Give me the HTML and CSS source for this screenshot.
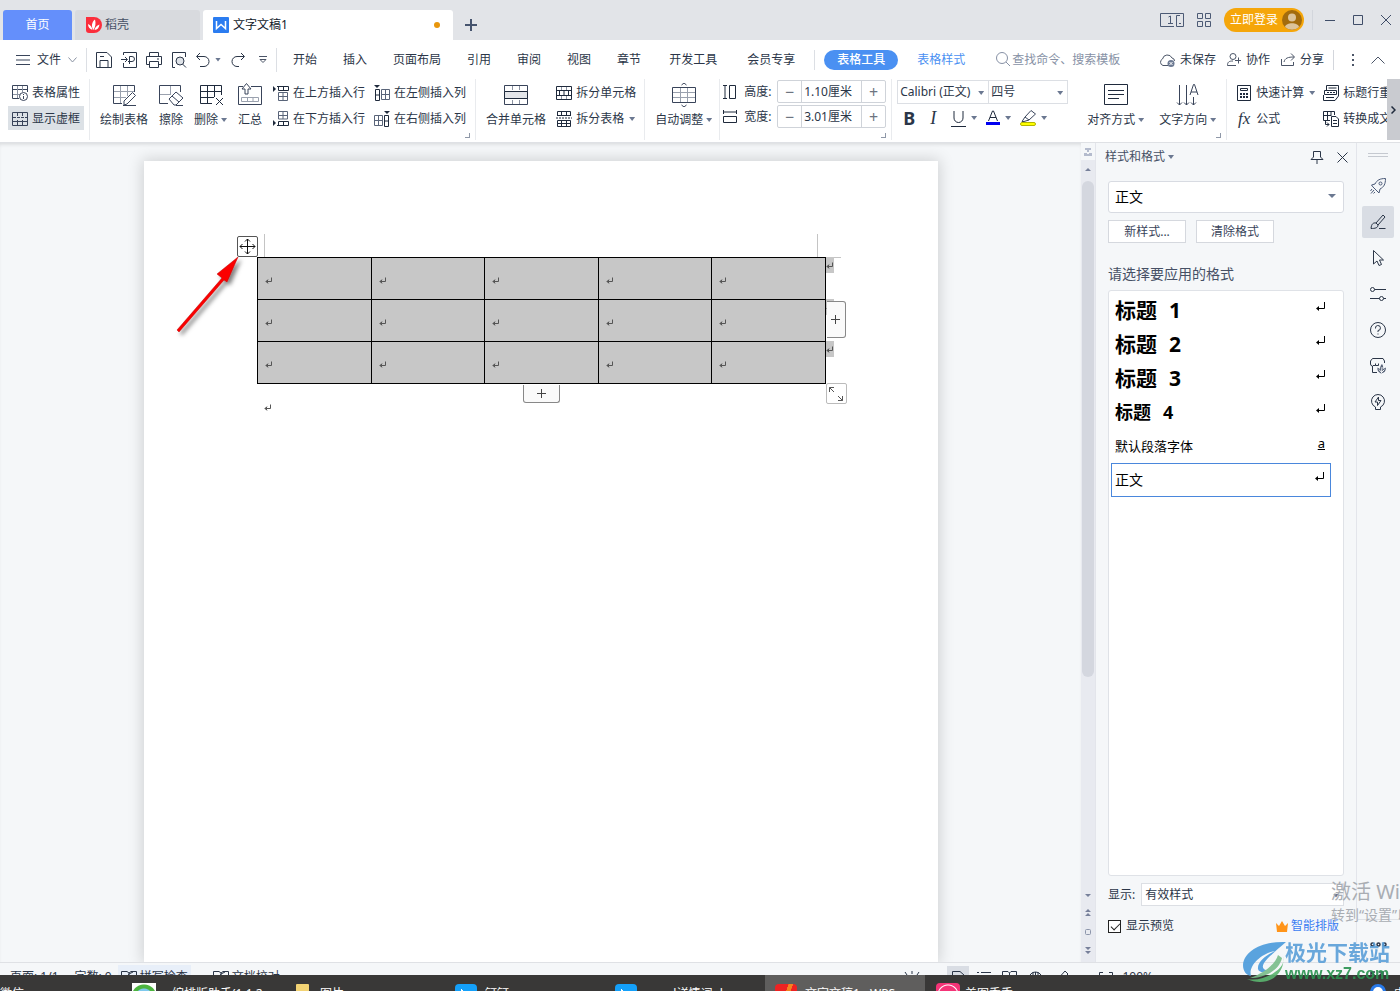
FILE: index.html
```html
<!DOCTYPE html>
<html lang="zh-CN">
<head>
<meta charset="utf-8">
<title>文字文稿1</title>
<link rel="stylesheet" href="styles.css">
</head>
<body>
<svg class="defs" aria-hidden="true">
  <symbol id="mark" viewBox="0 0 8 8"><path d="M6.500 0.500V4.500H1M3 2.500L1 4.500L3 6.500M2.500 3V6" fill="none" stroke="currentColor"/></symbol>
  <symbol id="mark-lg" viewBox="0 0 10 9"><path d="M8.500 0V6.500H1" fill="none" stroke="currentColor"/><path d="M0 6.500L3 4V9Z" fill="currentColor"/></symbol>
  <symbol id="book" viewBox="0 0 16 14"><path d="M.5 1.500H6L8 3L10 1.500H15.500V13H.5ZM8 3V13M3 6L5 8L8 4L12 2" fill="none" stroke="currentColor"/></symbol>
</svg>
<div class="app">
  <header class="titlebar">
    <nav class="tabs">
      <button class="tab tab-home">首页</button>
      <button class="tab tab-store">
        <svg width="16" height="16" viewBox="0 0 16 16"><path d="M0 0H8A8 8 0 0 1 8 16H3A3 3 0 0 1 0 13Z" fill="#fb2e3c"/><path d="M7.500 13C5 10 5.500 5 9 2.500C10 6 9.500 10 7.500 13ZM6.500 13C3.500 12 2 10 2 7C4.500 8 6 10 6.500 13ZM8.500 13C9 10.500 10.500 8.500 13.500 7.500C13 11 11.500 12.500 8.500 13Z" fill="#fff"/></svg>
        稻壳</button>
      <button class="tab tab-doc">
        <svg width="16" height="16" viewBox="0 0 16 16"><rect width="16" height="16" rx="1" fill="#2b7cf0"/><path d="M3.500 4V11.500L8 7.500L12.500 11.500V4" fill="none" stroke="#fff" stroke-width="1.500"/></svg>
        文字文稿1<i class="dot"></i></button>
      <button class="tab-add" aria-label="新建"><svg width="12" height="12"><path d="M6 0V12M0 6H12" stroke="#46546e" stroke-width="2"/></svg></button>
    </nav>
    <div class="window-tools">
      <button class="one" aria-label="布局"><svg width="24" height="14" fill="none" stroke="#4c5a75"><path d="M14 13.500H.5V.5H23.500V13.500H16.500V2.500H20M8.500 4L10.500 3V10.500M8 10.500H13M19 10.500H21"/></svg></button>
      <button class="grid4" aria-label="应用"><svg width="14" height="14" fill="none" stroke="#4c5a75"><path d="M.5.5H5.500V5.500H.5ZM8.500.5H13.500V5.500H8.500ZM.5 8.500H5.500V13.500H.5ZM8.500 8.500H13.500V13.500H8.500Z"/></svg></button>
      <button class="login">立即登录<svg width="20" height="20"><circle cx="10" cy="10" r="10" fill="#a36c0d"/><circle cx="10" cy="7.500" r="4" fill="#dcc49b"/><path d="M3 17C4 12 16 12 17 17A10 10 0 0 1 3 17Z" fill="#dcc49b"/></svg></button>
      <i class="rule"></i>
      <button aria-label="最小化"><svg width="10" height="10"><path d="M0 5.500H10" stroke="#3f4d68"/></svg></button>
      <button aria-label="最大化"><svg width="10" height="10"><path d="M.5.5H9.500V9.500H.5Z" fill="none" stroke="#3f4d68"/></svg></button>
      <button aria-label="关闭"><svg width="10" height="10"><path d="M0 0L10 10M10 0L0 10" stroke="#3f4d68"/></svg></button>
    </div>
  </header>

  <div class="menubar">
    <button class="file"><svg width="14" height="10"><path d="M0 .5H14M0 5H14M0 9.500H14" stroke="#39445a"/></svg>文件<svg width="9" height="6"><path d="M.5.5L4.500 5L8.500.5" fill="none" stroke="#8a93a3"/></svg></button>
    <div class="quick">
      <button aria-label="保存"><svg width="16" height="16" fill="none" stroke="#2b3648"><path d="M.5.5H11L15.500 5V15.500H.5ZM4 15V8.500H12V15M4 4.500H8"/></svg></button>
      <button aria-label="输出PDF"><svg width="16" height="16" fill="none" stroke="#2b3648"><path d="M2.500 3V.5H15.500V15.500H2.500V11M0 7.500H6M4 5L6.500 7.500L4 10M8.500 12V4.500H11A2.500 2.500 0 0 1 11 9.500H7"/></svg></button>
      <button aria-label="打印"><svg width="16" height="16" fill="none" stroke="#2b3648"><path d="M3.500 4V.5H12.500V4M3 12.500H.5V4.500H15.500V12.500H13M3.500 9.500H12.500V15.500H3.500ZM11 7H13"/></svg></button>
      <button aria-label="预览"><svg width="16" height="16" fill="none" stroke="#2b3648"><path d="M4 15.500H1.500V.5H14.500V5M11.500 12L15 15.500"/><circle cx="9" cy="9" r="4" fill="#dfe3e8"/></svg></button>
      <button aria-label="撤销" class="with-caret"><svg width="14" height="14" fill="none" stroke="#2b3648"><path d="M4 0L.5 3.500L4 7M1 3.500H8A5 5 0 0 1 8 13.500H4"/></svg><i class="caret"></i></button>
      <button aria-label="恢复"><svg width="14" height="14" fill="none" stroke="#2b3648"><path d="M10 0L13.500 3.500L10 7M13 3.500H6A5 5 0 0 0 6 13.500H8"/></svg></button>
      <button aria-label="更多"><svg width="8" height="8" fill="none" stroke="#4b5567"><path d="M0 .5H8M1 3.500L4 6.500L7 3.500Z"/></svg></button>
    </div>
    <nav class="menus">
      <button>开始</button><button>插入</button><button>页面布局</button><button>引用</button><button>审阅</button><button>视图</button><button>章节</button><button class="wide">开发工具</button><button class="wide">会员专享</button>
    </nav>
    <button class="pill">表格工具</button>
    <button class="blue">表格样式</button>
    <label class="search"><svg width="15" height="15" fill="none" stroke="#8791a5"><circle cx="6" cy="6" r="5.500"/><path d="M10 10L14 14"/></svg><input type="text" placeholder="查找命令、搜索模板" aria-label="查找命令"></label>
    <div class="menu-right">
      <button><svg width="17" height="14" fill="none" stroke="#4b5567"><path d="M9 12.500H4A3.500 3.500 0 0 1 3.500 6A5 5 0 0 1 13 5A3 3 0 0 1 15.500 8"/><circle cx="12" cy="10.500" r="3.500" fill="#6d7a93" stroke="none"/><path d="M10.500 9L13.500 12M13.500 9L10.500 12" stroke="#fff"/></svg>未保存</button>
      <button><svg width="15" height="14" fill="none" stroke="#4b5567"><circle cx="6" cy="3.500" r="3"/><path d="M9 12.500H.5C.5 9 2 8 6 8M8 7.500H14M11.500 4.500V10.500"/></svg>协作</button>
      <button><svg width="15" height="14" fill="none" stroke="#4b5567"><path d="M.5 6V12.500H12.500V9M3 9C4 5 7 4 13 4M10 .5L13.500 4L10 7.500"/></svg>分享</button>
      <i class="rule"></i>
      <button aria-label="更多选项"><svg width="2" height="12" fill="#4b5567"><path d="M0 0H2V2H0ZM0 5H2V7H0ZM0 10H2V12H0Z"/></svg></button>
      <button class="fold" aria-label="收起"><svg width="14" height="8"><path d="M.5 7.500L7 1L13.500 7.500" fill="none" stroke="#4b5567"/></svg></button>
    </div>
  </div>

  <div class="ribbon">
    <div class="groups">
      <section class="group g-props">
        <div class="stack">
          <button class="row"><svg width="16" height="16" fill="none" stroke="#39445a"><path d="M7 13.500H.5V.5H15.500V7M.5 4.500H15" /><path d="M5.500 1V13M1 9.500H8M10.500 1V7" stroke="#8b93a2"/><circle cx="11.500" cy="11.500" r="4" fill="#fff"/><path d="M11.500 11V14M11.500 9V10"/></svg>表格属性</button>
          <button class="row on"><svg width="16" height="16" fill="none" stroke="#39445a"><path d="M.5 1.500H15.500V14.500H.5ZM5.500 1.500V5M10.500 1.500V5M5.500 9V14M10.500 9V14M.5 10.500H15"/><path d="M1 6.500H15" stroke-dasharray="3 1"/></svg>显示虚框</button>
        </div>
      </section>
      <section class="group g-draw">
        <button class="big"><svg width="24" height="24" fill="none" stroke="#39445a"><path d="M10 20.500H1.500V2.500H22.500V9" /><path d="M2 8.500H22M2 14.500H14M8.500 3V20M15.500 3V13" stroke="#9aa1ae"/><path d="M12 22V18L20.500 9.500L23.500 12.500L15 21ZM11 22.500H24" fill="#fff"/></svg><span>绘制表格</span></button>
        <button class="big"><svg width="24" height="24" fill="none" stroke="#39445a"><path d="M9 20.500H.5V2.500H21.500V9"/><path d="M1 11.500H12M11.500 3V12" stroke="#9aa1ae"/><path d="M10 16L17 9L24 15L17 22H15ZM13 13L20 19M17 22.500H24" fill="#fff"/></svg><span>擦除</span></button>
        <button class="big"><svg width="24" height="24" fill="none" stroke="#1f2a3c"><path d="M13 20.500H1.500V2.500H22.500V12M1.500 8.500H22M1.500 14.500H15M8.500 3V20M15.500 3V14M17 15L24 22M24 15L17 22"/></svg><span class="cap">删除<i class="caret"></i></span></button>
        <button class="big"><svg width="24" height="24" fill="none" stroke="#39445a"><path d="M5 3.500H.5V21.500H23.500V3.500H13"/><path d="M3.500 14.500H20.500V18.500H3.500ZM9.500 14V18M15 14V18" stroke="#9aa1ae"/><path d="M7 11V6H4L8.500.5L13 6H10V11Z" fill="#fff"/></svg><span>汇总</span></button>
        <div class="stack">
          <button class="row"><svg width="16" height="16" fill="none" stroke="#1f2a3c"><path d="M0 1V7L3 4Z" fill="#1f2a3c" stroke="none"/><path d="M4 1.500H15.500V5.500H5.500V1.500M10.500 1.500V5"/><path d="M5.500 7.500H14.500V15.500H5.500ZM10 8V15M6 11.500H14" stroke="#596479"/></svg>在上方插入行</button>
          <button class="row"><svg width="16" height="16" fill="none" stroke="#1f2a3c"><path d="M0 9V15L3 12Z" fill="#1f2a3c" stroke="none"/><path d="M4 14.500H15.500V10.500H5.500V14.500M10.500 10.500V14"/><path d="M5.500.5H14.500V8H5.500ZM10 1V8M6 4.500H14" stroke="#596479"/></svg>在下方插入行</button>
        </div>
        <div class="stack cols">
          <button class="row"><svg width="16" height="16" fill="none" stroke="#1f2a3c"><path d="M0 0H6L3 3Z" fill="#1f2a3c" stroke="none"/><path d="M1.500 4.500H5.500V15.500H1.500ZM1.500 10H5"/><path d="M7.500 4.500H15.500V14.500H7.500ZM11.500 5V14M8 9.500H15" stroke="#596479"/></svg>在左侧插入列</button>
          <button class="row"><svg width="16" height="16" fill="none" stroke="#1f2a3c"><path d="M10 0H16L13 3Z" fill="#1f2a3c" stroke="none"/><path d="M10.500 4.500H14.500V15.500H10.500ZM10.500 10H14"/><path d="M.5 4.500H8.500V14.500H.5ZM4.500 5V14M1 9.500H8" stroke="#596479"/></svg>在右侧插入列</button>
        </div>
        <i class="corner"></i>
      </section>
      <section class="group g-merge">
        <button class="big"><svg width="24" height="24" fill="none" stroke="#1f2a3c"><path d="M8.500 3V7M15.500 3V7M8.500 17V21M15.500 17V21" stroke="#8b93a2"/><path d="M.5 2.500H23.500V21.500H.5Z" stroke="#39445a"/><path d="M.5 8.500H23.500V15.500H.5Z" fill="#e3e5e9"/></svg><span>合并单元格</span></button>
        <div class="stack">
          <button class="row"><svg width="16" height="16" fill="none" stroke="#1f2a3c"><path d="M5.500 2V5M10.500 2V5M5.500 11V14M10.500 11V14" stroke="#8b93a2"/><path d="M.5 1.500H15.500V14.500H.5ZM.5 5.500H15.500M.5 10.500H15.500M3.500 5.500V10.500M8 5.500V10.500M12.500 5.500V10.500"/></svg>拆分单元格</button>
          <button class="row"><svg width="16" height="16" fill="none" stroke="#1f2a3c"><path d="M1.500 5V.5H14.500V5M5.500 1V5M10.500 1V5M1 4.500H15M1.500 9.500H14.500V15.500H1.500ZM5.500 10V15M10.500 10V15M1.500 12.500H14"/><path d="M0 7H16" stroke-dasharray="2 1"/></svg>拆分表格<i class="caret"></i></button>
        </div>
      </section>
      <section class="group g-auto">
        <button class="big"><svg width="24" height="24" fill="none" stroke="#39445a"><path d="M1 9.500H23M1 14.500H23M8.500 5V19M15.500 5V19" stroke="#9aa1ae"/><path d="M.5 4.500H23.500V19.500H.5ZM9.500 2L12 0L14.500 2M9.500 22L12 24L14.500 22"/></svg><span class="cap">自动调整<i class="caret"></i></span></button>
      </section>
      <section class="group g-size">
        <div class="field"><svg width="14" height="14" fill="none" stroke="#1f2a3c"><path d="M0 .5H4M2 0V14M0 13.500H4M6.500.5H12.500V13.500H6.500Z"/></svg><label for="rowh">高度:</label><div class="spin"><button aria-label="减小高度">−</button><input id="rowh" value="1.10厘米"><button aria-label="增大高度">+</button></div></div>
        <div class="field"><svg width="14" height="14" fill="none" stroke="#1f2a3c"><path d="M.5 0V4M0 2H14M13.500 0V4M.5 6.500H13.500V12.500H.5Z"/></svg><label for="colw">宽度:</label><div class="spin"><button aria-label="减小宽度">−</button><input id="colw" value="3.01厘米"><button aria-label="增大宽度">+</button></div></div>
        <i class="corner"></i>
      </section>
      <section class="group g-font">
        <div class="fontboxes"><span class="pick"><select class="font" aria-label="字体"><option>Calibri (正文)</option></select></span><span class="pick"><select class="size" aria-label="字号"><option>四号</option></select></span></div>
        <div class="formats">
          <button class="b">B</button><button class="i">I</button>
          <button class="with-caret" aria-label="下划线"><svg width="15" height="17" fill="none" stroke="#1f2a3c"><path d="M3 1V8A4.500 4.500 0 0 0 12 8V1M0 16.500H15"/></svg><i class="caret"></i></button>
          <button class="with-caret" aria-label="字体颜色"><svg width="14" height="17" fill="none" stroke="#1f2a3c"><path d="M2.500 11L6.500 1H7.500L11.500 11M4 7.500H10"/><path d="M0 12H14V15H0Z" fill="#0000f0" stroke="none"/></svg><i class="caret"></i></button>
          <button class="with-caret" aria-label="突出显示"><svg width="16" height="17" fill="none" stroke="#39445a"><rect x=".5" y="12.500" width="15" height="3" rx="1.500" fill="#ff0" stroke="#b5b500"/><path d="M2 11.500L5 7L11 .5L15.500 4L9 10L4 11.500ZM5 7L9 10" fill="#fff"/></svg><i class="caret"></i></button>
        </div>
      </section>
      <section class="group g-align">
        <button class="big"><svg width="24" height="24" fill="none" stroke="#1f2a3c"><path d="M.5 1.500H23.500V21.500H.5ZM4 7.500H20M4 11.500H20M4 15.500H15"/></svg><span class="cap">对齐方式<i class="caret"></i></span></button>
        <button class="big"><svg width="24" height="24" fill="none" stroke="#39445a"><path d="M3.500 2V22M1 19.500L3.500 22L6 19.500M10.500 2V22M8 19.500L10.500 22L13 19.500M17.500 14V22M15 19.500L17.500 22L20 19.500M14 12L17.500 1.500H18.500L22 12M15 9H21"/></svg><span class="cap">文字方向<i class="caret"></i></span></button>
        <i class="corner"></i>
      </section>
      <section class="group g-calc">
        <div class="stack">
          <button class="row"><svg width="16" height="16" fill="none" stroke="#1f2a3c"><path d="M1.500.5H14.500V15.500H1.500ZM4.500 3.500H11.500V5.500H4.500Z"/><path d="M4 9H12M4 12H12" stroke-width="2" stroke-dasharray="2 1"/></svg>快速计算<i class="caret"></i></button>
          <button class="row"><span class="fx">fx</span>公式</button>
        </div>
        <div class="stack head">
          <button class="row"><svg width="16" height="16" fill="none" stroke="#1f2a3c"><path d="M3.500 5V.5H15.500V11M1.500 5.500H13.500V9.500H1.500ZM.5 10V15.500H12L15.500 11M3 12.500H11M5.500 3H13.500"/><path d="M4 7.500H12" stroke-dasharray="2 1"/></svg>标题行重复</button>
          <button class="row"><svg width="16" height="16" fill="none" stroke="#1f2a3c"><path d="M7 9.500H.5V.5H11.500V4M.5 4.500H8M4.500.5V9M8 .5V5M2.500 10V13.500H6M4 11.500L6 13.500L4 15.500M8.500 5.500H13L15.500 8V15.500H8.500ZM10 9.500H14M10 12.500H14"/></svg>转换成文本</button>
        </div>
      </section>
    </div>
    <button class="ribbon-next" aria-label="向右滚动"><svg width="5" height="8"><path d="M.5.5L4 4L.5 7.500" fill="none" stroke="#1f2a3c" stroke-width="1.500"/></svg></button>
  </div>

  <main class="workspace">
    <div class="editor">
      <article class="page">
        <div class="table-wrap">
          <table class="grid">
            <tr><td><svg class="mark"><use href="#mark"/></svg></td><td><svg class="mark"><use href="#mark"/></svg></td><td><svg class="mark"><use href="#mark"/></svg></td><td><svg class="mark"><use href="#mark"/></svg></td><td><svg class="mark"><use href="#mark"/></svg></td></tr>
            <tr><td><svg class="mark"><use href="#mark"/></svg></td><td><svg class="mark"><use href="#mark"/></svg></td><td><svg class="mark"><use href="#mark"/></svg></td><td><svg class="mark"><use href="#mark"/></svg></td><td><svg class="mark"><use href="#mark"/></svg></td></tr>
            <tr><td><svg class="mark"><use href="#mark"/></svg></td><td><svg class="mark"><use href="#mark"/></svg></td><td><svg class="mark"><use href="#mark"/></svg></td><td><svg class="mark"><use href="#mark"/></svg></td><td><svg class="mark"><use href="#mark"/></svg></td></tr>
          </table>
          <i class="crop crop-l"></i><i class="crop crop-r"></i><i class="crop crop-h"></i>
          <span class="rowend r1"><svg class="mark"><use href="#mark"/></svg></span>
          <span class="rowend r2"><svg class="mark"><use href="#mark"/></svg></span>
          <span class="rowend r3"><svg class="mark"><use href="#mark"/></svg></span>
          <button class="handle move" aria-label="移动表格"><svg width="17" height="17" fill="none" stroke="#111"><path d="M8.500 1V16M1 8.500H16M6 3.500L8.500 1L11 3.500M6 13.500L8.500 16L11 13.500M3.500 6L1 8.500L3.500 11M13.500 6L16 8.500L13.500 11"/></svg></button>
          <button class="handle add-col" aria-label="添加列"><svg width="9" height="9"><path d="M4.500 0V9M0 4.500H9" stroke="#444"/></svg></button>
          <button class="handle add-row" aria-label="添加行"><svg width="9" height="9"><path d="M4.500 0V9M0 4.500H9" stroke="#444"/></svg></button>
          <button class="handle resize" aria-label="调整大小"><svg width="14" height="14" fill="none" stroke="#555"><path d="M.5 5V.5H5M.5.5L5 5M13.500 9V13.500H9M13.500 13.500L9 9"/></svg></button>
          <svg class="arrow" width="80" height="90"><defs><filter id="sh" x="-20%" y="-20%" width="150%" height="150%"><feDropShadow dx="3" dy="3" stdDeviation="2" flood-opacity=".5"/></filter></defs><path d="M8 77L53 25L48 21L69 4L58 29L55 27L10 79Z" fill="#fb0505" stroke="#b00" stroke-width=".5" filter="url(#sh)"/></svg>
        </div>
        <p class="after"><svg class="mark"><use href="#mark"/></svg></p>
      </article>
    </div>
    <div class="scrollbar">
      <svg class="ruler" width="8" height="8" fill="#b4bbcd"><path d="M1 0H7V2H5V4H3V2H1ZM0 5H3V6H5V5H8V8H0Z"/></svg>
      <div class="track">
        <i class="up"></i>
        <div class="thumb"></div>
        <div class="jumps"><i class="down"></i><svg width="6" height="8" fill="#77809a"><path d="M3 0L6 3H0ZM3 4L6 7H0Z"/></svg><svg width="6" height="6"><rect x=".5" y=".5" width="5" height="5" rx="1" fill="none" stroke="#8d96ab"/></svg><svg width="6" height="8" fill="#77809a"><path d="M0 0H6L3 3ZM0 4H6L3 7Z"/></svg></div>
      </div>
    </div>
    <aside class="panel">
      <header><h2>样式和格式<i class="caret"></i></h2><button aria-label="固定"><svg width="14" height="14" fill="none" stroke="#2b3648"><path d="M3.500 1.500H10.500V7L13 9.500H1L3.500 7ZM7 10V14"/></svg></button><button aria-label="关闭窗格"><svg width="11" height="11"><path d="M.5.5L10.500 10.500M10.500.5L.5 10.500" stroke="#2b3648"/></svg></button></header>
      <span class="pick current"><select aria-label="当前样式"><option>正文</option></select></span>
      <div class="actions"><button>新样式...</button><button>清除格式</button></div>
      <h3>请选择要应用的格式</h3>
      <div class="styles">
        <button class="h"><b>标题</b><b>1</b><svg class="mark-lg"><use href="#mark-lg"/></svg></button>
        <button class="h"><b>标题</b><b>2</b><svg class="mark-lg"><use href="#mark-lg"/></svg></button>
        <button class="h"><b>标题</b><b>3</b><svg class="mark-lg"><use href="#mark-lg"/></svg></button>
        <button class="h small"><b>标题</b><b>4</b><svg class="mark-lg"><use href="#mark-lg"/></svg></button>
        <button class="default">默认段落字体<u>a</u></button>
        <button class="body">正文<svg class="mark-lg"><use href="#mark-lg"/></svg></button>
      </div>
      <div class="show"><label for="show">显示:</label><span class="pick"><select id="show"><option>有效样式</option></select></span></div>
      <div class="foot"><label><input type="checkbox" checked>显示预览</label><a href="#"><svg width="12" height="11" fill="#ff9419"><path d="M0 2L3 5L6 0L9 5L12 2L11 11H1Z"/></svg>智能排版</a></div>
    </aside>
    <nav class="rail">
      <i class="grip"></i>
      <button aria-label="启动"><svg width="16" height="16" fill="none" stroke="#4b5a78"><path d="M15.500.5C10 .5 7 2 5 6L1.500 7L3 9L7 13L9 15L10 11C14 9 15.500 6 15.500.5ZM2 11L.5 13M4 12L1 15.500M5 14L3.500 15.500"/><circle cx="10.500" cy="5.500" r="1.500"/></svg></button>
      <button class="on" aria-label="样式"><svg width="16" height="16" fill="none" stroke="#2b3648"><path d="M6 9L13 1L15 3L8 11M1 14.500C1.500 10 3 8.500 6 9L8 11C8 14 5 14.500 1 14.500ZM9 14.500H15.500"/></svg></button>
      <button aria-label="选择"><svg width="16" height="16" fill="none" stroke="#2b3648"><path d="M3.500.5L13.500 10H9.500L11.500 14.500L9 15.500L7 11L3.500 14Z"/></svg></button>
      <button aria-label="属性"><svg width="16" height="16" fill="none" stroke="#2b3648"><circle cx="2.500" cy="3.500" r="2"/><circle cx="11.500" cy="12.500" r="2"/><path d="M4.500 3.500H16M0 12.500H9.500M13.500 12.500H16"/></svg></button>
      <button aria-label="帮助"><svg width="16" height="16" fill="none" stroke="#2b3648"><circle cx="8" cy="8" r="7.500"/><path d="M5.500 6.500A2.500 2.500 0 1 1 8 8.500V10M8 11.500V12.500"/></svg></button>
      <button aria-label="素材"><svg width="16" height="16" fill="none" stroke="#2b3648"><path d="M7 14.500H2.500V8A2 2 0 0 1 .5 6V3L2.500.5H13L14.500 3V5M3 7.500H5.500V5.500M5.500 7.500H8.500V5.500"/><path d="M11 15.500C8 14 7 12 7.500 9.500L10 11C10 8.500 11 7 12 6C13 7 13.500 9 13 11L16 9.500C16 13 14.500 15 11 15.500Z" fill="#596479" stroke="none"/><path d="M11.500 15L12 9M9 11.500L11.500 14.500L14.500 11.500" stroke="#f5f7f9"/></svg></button>
      <button aria-label="灵感"><svg width="16" height="16" fill="none" stroke="#2b3648"><path d="M5.500 13A6.500 6.500 0 1 1 10.500 13V15.500H5.500ZM8.500 3L5 8H7.500V11.500L11 6.500H8.500Z"/></svg></button>
      <div class="rail-more"><svg width="17" height="5" fill="none" stroke="#2b3648" stroke-width="1.500"><circle cx="2.500" cy="2.500" r="1.500"/><circle cx="8.500" cy="2.500" r="1.500"/><circle cx="14.500" cy="2.500" r="1.500"/></svg></div>
    </nav>
  </main>

  <footer class="status">
    <div class="status-in">
      <span class="st">页面: 1/1</span><span class="st">字数: 0</span>
      <button class="st check"><svg width="16" height="14"><use href="#book"/></svg>拼写检查</button>
      <button class="st proof"><svg width="16" height="14"><use href="#book"/></svg>文档校对</button>
      <div class="views">
        <button aria-label="护眼"><svg width="16" height="14" fill="none" stroke="#2b3648"><path d="M4 10A4 4 0 0 1 12 10M8 1V4M1 2L3 5M15 2L13 5M0 8H2M14 8H16"/></svg></button>
        <button class="on" aria-label="页面视图"><svg width="14" height="14" fill="none" stroke="#2b3648"><path d="M1.500 13V1.500H9L13 5V13"/></svg></button>
        <button aria-label="大纲"><svg width="14" height="14" fill="none" stroke="#2b3648"><path d="M0 2.500H2M4 2.500H14M0 7.500H2M4 7.500H14"/></svg></button>
        <button aria-label="阅读"><svg width="15" height="14" fill="none" stroke="#2b3648"><path d="M.5 1.500H6L7.500 3L9 1.500H14.500V13H.5ZM7.500 3V13"/></svg></button>
        <button aria-label="网页"><svg width="15" height="14" fill="none" stroke="#2b3648"><circle cx="7.500" cy="8.500" r="6.500"/><path d="M1 6.500H14M7.500 2V14M5 2V14M10 2V14"/></svg></button>
        <button aria-label="书写"><svg width="14" height="14" fill="none" stroke="#2b3648"><path d="M2 11L11 1L14 4L5 13"/></svg></button>
      </div>
      <button class="zoom"><svg width="14" height="14" fill="none" stroke="#2b3648"><path d="M.5 5V2.500H4M10 2.500H13.500V5M4 6H10V12H4Z"/></svg>100%</button>
      <button class="full" aria-label="全屏"><svg width="14" height="14" fill="none" stroke="#2b3648" stroke-width="1.500"><path d="M1 6V2H5M1 2L5 6M13 6V2H9M13 2L9 6"/></svg></button>
    </div>
  </footer>

  <footer class="taskbar">
    <div class="task t-wx">微信</div>
    <div class="task t-edit"><i class="ico e"></i>编排版助手(1.1.2</div>
    <div class="task t-pic"><i class="ico folder"></i>图片</div>
    <div class="task t-ding"><i class="ico bird"></i>钉钉</div>
    <div class="task t-word"><i class="ico bird"></i>　　d详情词.d</div>
    <div class="task t-wps"><i class="ico wps"></i>文字文稿1 - WPS</div>
    <div class="task t-mt"><i class="ico mt"></i>美图秀秀</div>
    <div class="tray"><i class="ico ring"></i>中</div>
  </footer>

  <div class="activate"><div>激活 Windows</div><small>转到“设置”以激活</small></div>
  <div class="brand">
    <svg width="46" height="42" viewBox="0 0 46 42"><path d="M44 1C20 0 2 10 1 24C1 30 4 34 9 35C6 24 20 12 33 10C24 14 15 21 16 28C17 32 23 32 28 29C22 30 19 27 22 22C26 16 36 8 44 1Z" fill="#4a9bdc"/><path d="M40 13C43 19 42 25 33 31C25 37 14 40 5 38C15 43 28 42 35 34C41 28 43 19 40 13Z" fill="#5bb56f"/><path d="M36 14C34 22 24 31 8 37C22 37 37 30 40 17Z" fill="#79bd8a"/></svg>
    <div class="brand-text"><strong>极光下载站</strong><em>www.xz7.com</em></div>
  </div>
</div>
</body>
</html>
```

FILE: styles.css
```css
* { box-sizing: border-box; }
body { margin: 0; font: 12px/16px "Noto Sans", "Noto Sans CJK SC", sans-serif; color: #2b3648; }
button, input, select { font: inherit; color: inherit; margin: 0; padding: 0; border: 0; background: none; border-radius: 0; }
button { display: flex; align-items: center; white-space: nowrap; flex: none; }
svg { flex: none; display: block; }
.defs { position: absolute; width: 0; height: 0; }
.app { position: relative; height: 100vh; display: flex; flex-direction: column; overflow: hidden; background: #fff; }
.caret { flex: none; width: 6px; height: 4px; background: #6b7891; clip-path: polygon(0 0, 100% 0, 50% 100%); }
.rule { width: 1px; height: 20px; background: #d3d6dc; }

/* title bar */
.titlebar { flex: none; height: 40px; display: flex; justify-content: space-between; background: #e2e4e8; }
.tabs { display: flex; align-items: flex-end; gap: 3px; padding-left: 3px; }
.tab { height: 30px; border-radius: 3px 3px 0 0; }
.tab-home { width: 69px; justify-content: center; background: #648ffb; color: #fff; }
.tab-store { width: 125px; padding-left: 11px; gap: 3px; background: #d8dade; color: #465065; }
.tab-doc { width: 250px; padding: 0 13px 0 10px; gap: 4px; background: #fff; color: #111a2b; }
.dot { width: 6px; height: 6px; margin-left: auto; border-radius: 50%; background: #e8960c; }
.tab-add { height: 30px; padding-left: 9px; }
.window-tools { display: flex; align-items: center; gap: 18px; padding-right: 9px; }
.window-tools .one { margin-right: -5px; }
.window-tools .grid4 { margin-right: -5px; }
.login { width: 80px; height: 24px; padding: 0 2px 0 6px; justify-content: space-between; border-radius: 12px; background: #f5a60a; color: #fff; }
.window-tools .rule { margin: 0 -6px 0 -10px; }

/* menu bar */
.menubar { flex: none; height: 39px; display: flex; align-items: center; }
.file { gap: 7px; padding: 0 9px 0 16px; height: 24px; border-right: 1px solid #dcdfe4; }
.quick { height: 24px; display: flex; align-items: center; gap: 9px; padding: 0 5px 0 9px; border-right: 1px solid #dcdfe4; }
.quick button { min-width: 16px; justify-content: center; }
.with-caret { gap: 5px; }
.menus { display: flex; padding: 0 7px 0 3px; border-right: 1px solid #dcdfe4; height: 20px; }
.menus button { padding: 0 13px; }
.menus .wide { padding: 0 15px; }
.menus .wide + .wide { padding-right: 12px; }
.pill { height: 20px; margin-left: 9px; padding: 0 13px; border-radius: 10px; background: #4a90f2; color: #fff; font-weight: 500; }
.blue { margin-left: 19px; color: #4a90f2; }
.search { display: flex; align-items: center; gap: 1px; margin-left: 31px; }
.search input { width: 116px; }
.search input::placeholder { color: #8791a5; opacity: 1; }
.menu-right { margin-left: auto; display: flex; align-items: center; gap: 11px; padding-right: 15px; }
.menu-right button { gap: 4px; }
.menu-right .rule { margin: 0 7px 0 -2px; }
.menu-right .fold { margin-left: 6px; }

/* ribbon */
.ribbon { flex: none; height: 64px; display: flex; border-bottom: 1px solid #dfe1e5; }
.groups { flex: 1; min-width: 0; display: flex; overflow: hidden; }
.group { position: relative; flex: none; display: flex; height: 61px; border-right: 1px solid #e9ebee; }
.stack { display: flex; flex-direction: column; gap: 2px; padding-top: 1px; }
.row { height: 24px; gap: 4px; padding: 2px 4px 0; }
.row .caret { margin-left: 1px; }
.row.on { background: #dce1e6; }
.big { flex-direction: column; gap: 5px; padding: 4px 0 0; align-self: flex-start; }
.cap { display: flex; align-items: center; gap: 3px; }
.corner { position: absolute; right: 5px; bottom: 2px; width: 5px; height: 5px; border: solid #8f98a8; border-width: 0 1px 1px 0; }
.g-props { padding: 0 5px 0 8px; }
.g-draw { padding: 0 5px 0 10px; gap: 11px; }
.g-draw .stack { margin-left: -4px; }
.g-draw .stack.cols { margin-left: -10px; }
.g-merge { padding: 0 4px 0 10px; gap: 6px; }
.g-auto { padding: 0 7px 0 10px; }
.g-size { flex-direction: column; padding: 1px 5px 0 3px; gap: 2px; }
.field { display: flex; align-items: center; height: 23px; }
.field label { width: 33px; margin: 0 0 0 7px; }
.spin { display: flex; width: 109px; height: 23px; border: 1px solid #cfd3d9; border-radius: 2px; }
.spin button { width: 23px; justify-content: center; font-size: 16px; color: #6d7480; }
.spin input { flex: 1; min-width: 0; padding-left: 2px; border: solid #cfd3d9; border-width: 0 1px; }
.g-font { flex-direction: column; gap: 2px; padding: 1px 0 0 5px; border: 0; }
.pick { position: relative; display: flex; }
.pick select { appearance: none; width: 100%; border: 1px solid #dcdfe4; background: #fff; }
.pick::after { content: ""; position: absolute; right: 5px; top: calc(50% - 1px); width: 6px; height: 4px; background: #6b7891; clip-path: polygon(0 0, 100% 0, 50% 100%); pointer-events: none; }
.fontboxes { display: flex; }
.fontboxes select { height: 24px; padding: 0 2px; }
.fontboxes .font { width: 92px; }
.fontboxes .size { width: 79px; border-left: 0; }
.formats { display: flex; align-items: center; height: 24px; gap: 9px; padding-left: 6px; }
.formats .b { font-weight: 700; font-size: 18px; }
.formats .i { font: italic 18px/20px "Liberation Serif", serif; padding: 0 6px; }
.g-align { padding: 0 10px 0 19px; gap: 15px; }
.g-calc { padding-left: 5px; border: 0; }
.g-calc .stack.head { margin-left: 0; }
.fx { width: 16px; font: italic 17px/20px "Liberation Serif", serif; }
.ribbon-next { width: 13px; height: 61px; justify-content: center; background: #c9cbd0; }

/* document area */
.workspace { flex: 1; min-height: 0; display: flex; background: #f5f7f9; }
.editor { flex: 1; min-width: 0; overflow: hidden; display: flex; justify-content: center; padding-top: 18px; box-shadow: inset 0 3px 4px -2px #0002; }
.page { width: 794px; flex: none; padding: 96px 112px 0 113px; background: #fff; box-shadow: 0 0 14px 2px #00000026; }
.table-wrap { position: relative; }
.grid { width: 569px; border-collapse: collapse; table-layout: fixed; background: #c7c7c7; }
.grid td { height: 42px; padding: 5px 0 0 7px; border: 1px solid #000; }
.grid td:first-child { width: 114px; }
.mark { width: 8px; height: 8px; color: #555; }
.after { margin: 0; padding: 20px 0 0 7px; }
.crop { position: absolute; width: 1px; height: 23px; top: -23px; background: #c4c4c4; }
.crop-l { left: 7px; }
.crop-r { right: 8px; }
.crop-h { top: 0; right: -15px; width: 15px; height: 1px; }
.rowend { position: absolute; left: 569px; width: 8px; height: 16px; padding-top: 5px; background: #c7c7c7; }
.r1 { top: 0; }
.r2 { top: 42px; }
.r3 { top: 84px; }
.handle { position: absolute; justify-content: center; border: 1px solid #888; background: #fafafa; }
.move { left: -20px; top: -21px; width: 21px; height: 21px; border-color: #555; border-radius: 2px; background: #fff; }
.add-col { left: 570px; top: 44px; width: 19px; height: 37px; border-left: 0; border-radius: 0 3px 3px 0; }
.add-row { left: 266px; top: 128px; width: 37px; height: 18px; border-top: 0; border-radius: 0 0 3px 3px; }
.resize { left: 569px; top: 126px; width: 21px; height: 21px; border-color: #bbb; border-radius: 2px; background: #fff; }
.arrow { position: absolute; left: -88px; top: -4px; }

.scrollbar { flex: none; width: 14px; display: flex; flex-direction: column; align-items: center; padding-top: 5px; gap: 4px; }
.track { flex: 1; width: 14px; display: flex; flex-direction: column; align-items: center; padding: 8px 0 7px; background: #e8eaf0; }
.up, .down { width: 6px; height: 3px; background: #77809a; clip-path: polygon(50% 0, 100% 100%, 0 100%); }
.down { clip-path: polygon(0 0, 100% 0, 50% 100%); }
.thumb { width: 12px; height: 63%; margin-top: 10px; border-radius: 6px; background: #d4d7df; }
.jumps { margin-top: auto; display: flex; flex-direction: column; gap: 12px; }

/* style panel */
.panel { flex: none; width: 262px; display: flex; flex-direction: column; padding: 0 12px 28px; border: solid #e3e5eb; border-width: 0 1px; }
.panel header { display: flex; align-items: center; gap: 13px; height: 28px; margin-right: -4px; }
.panel h2 { display: flex; align-items: center; gap: 3px; flex: 1; margin: 0 0 0 -3px; font-size: 12px; font-weight: 400; color: #465065; }
.current { margin-top: 10px; }
.current select { height: 32px; padding: 0 6px; border-color: #d8dbe2; border-radius: 3px; font-size: 14px; color: #000; }
.current::after { right: 8px; top: 13px; width: 8px; height: 4px; }
.actions { display: flex; gap: 10px; margin-top: 7px; }
.actions button { width: 78px; height: 23px; justify-content: center; border: 1px solid #d5d8de; background: #fff; color: #39445a; }
.panel h3 { margin: 21px 0 6px; font-size: 14px; line-height: 20px; font-weight: 400; color: #465065; }
.styles { flex: 1; min-height: 0; padding: 2px 12px 0 2px; border: 1px solid #dfe2e7; border-radius: 3px; background: #fff; color: #000; }
.styles button { width: 100%; height: 34px; padding: 0 4px; gap: 12px; }
.styles .h { font-size: 21px; }
.styles .small { font-size: 18px; }
.styles .default { font-size: 13px; }
.styles .body { border: 1px solid #4a87dc; padding: 0 4px 0 3px; font-size: 14px; }
.styles u { margin: 0 2px 6px auto; }
.mark-lg { width: 10px; height: 9px; margin: 0 1px 8px auto; }
.show { display: flex; align-items: center; gap: 6px; margin-top: 7px; }
.show .pick { flex: 1; }
.show select { height: 23px; padding: 0 3px; }
.foot { display: flex; align-items: center; justify-content: space-between; margin-top: 12px; padding-right: 5px; height: 16px; }
.foot label { display: flex; align-items: center; gap: 5px; }
.foot input { appearance: none; width: 13px; height: 13px; border: 1px solid #222; background: #fff; }
.foot input:checked::before { content: ""; display: block; width: 8px; height: 4px; margin: 2px 0 0 2px; border: solid #222; border-width: 0 0 1px 1px; transform: rotate(-45deg); }
.foot a { display: flex; align-items: center; gap: 3px; color: #3b7df2; text-decoration: none; }

.rail { flex: none; width: 43px; display: flex; flex-direction: column; align-items: center; gap: 4px; padding: 10px 1px 0 0; }
.grip { width: 20px; height: 4px; margin-bottom: 9px; border: solid #c5c9d0; border-width: 1px 0; }
.rail button { width: 32px; height: 32px; justify-content: center; border-radius: 2px; }
.rail .on { background: #d9dde4; }
.rail-more { margin-top: auto; width: 40px; height: 43px; display: flex; justify-content: center; padding-top: 22px; border-top: 1px solid #dfe2e7; }

/* bottom bars */
.status { flex: none; height: 13px; overflow: hidden; border-top: 1px solid #dfe1e5; background: #f5f7f9; }
.status-in { display: flex; align-items: center; height: 28px; }
.st { margin-left: 10px; margin-right: 6px; }
.check { height: 24px; margin: 0; padding: 0 3px; gap: 3px; background: #e8eff9; }
.proof { margin-left: 22px; gap: 3px; }
.views { margin-left: auto; display: flex; align-items: center; gap: 11px; }
.views button { height: 22px; }
.views .on { margin: 0 -3px 0 16px; padding: 0 4px; background: #d9dde4; }
.zoom { gap: 9px; margin-left: 31px; }
.full { margin: 0 16px 0 217px; }
.taskbar { flex: none; height: 16px; display: flex; overflow: hidden; background: #393837; color: #fff; }
.task, .tray { flex: none; display: flex; align-items: flex-start; height: 36px; padding-top: 10px; line-height: 18px; white-space: nowrap; overflow: hidden; }
.ico { flex: none; width: 22px; height: 22px; margin-top: -1px; margin-right: 8px; border-radius: 4px; }
.t-wx { width: 132px; }
.t-edit { width: 164px; }
.t-pic { width: 159px; }
.t-ding { width: 160px; }
.t-word { width: 150px; }
.t-wps { width: 160px; padding-left: 10px; background: #5f5e5d; }
.t-mt { padding-left: 11px; }
.e { width: 24px; margin-top: -2px; margin-right: 16px; border-radius: 0; background: radial-gradient(circle at 50% 14px, #7ec8ed 0 8px, #4cb43f 9px 12px, #fff 13px); }
.folder { width: 13px; margin-right: 11px; border-radius: 1px; background: #f3d374; }
.bird { background: linear-gradient(45deg, #fff 0 50%, #14a0fa 51%); background-color: #14a0fa; background-size: 9px 12px; background-repeat: no-repeat; background-position: 6px 3px; }
.wps { background: linear-gradient(110deg, #e22 45%, #f58220 46% 60%, #e22 61%); }
.mt { width: 24px; margin-top: -2px; margin-right: 5px; background: radial-gradient(circle at 50% 12px, #f43477 9px, #fff 10px, #f43477 11px); }
.tray { margin-left: auto; width: 30px; }
.ring { width: 16px; height: 16px; border-radius: 50%; border: 3px solid #2879e8; background: #fff; }

/* overlays */
.activate { position: absolute; left: calc(100% - 69px); top: calc(100% - 112px); width: 69px; overflow: hidden; white-space: nowrap; color: #a9adb3; font-size: 20px; line-height: 26px; }
.activate div, .activate small { display: block; }
.activate small { font-size: 14px; line-height: 20px; }
.brand { position: absolute; right: 10px; bottom: 7px; display: flex; align-items: center; opacity: .9; }
.brand-text { display: flex; flex-direction: column; margin-left: -3px; }
.brand strong { font-size: 21px; line-height: 24px; color: #5a9fd8; }
.brand em { font: 700 16px/20px "Liberation Sans", sans-serif; color: #2a9350; }
```
